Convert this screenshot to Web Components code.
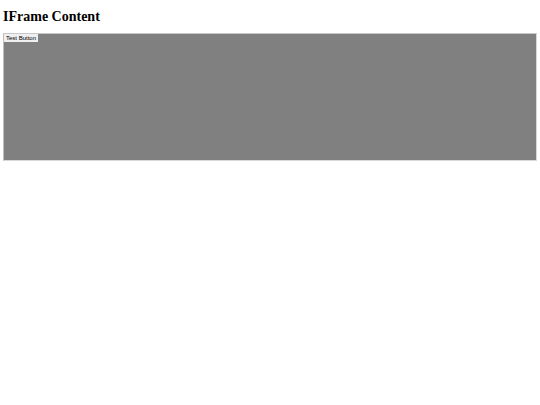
<!DOCTYPE html>
<html lang="en">
<head>
  <meta charset="utf-8">
  <title>IFrame Content</title>
  <style>
    body{
      background-color: white;
      font-family: "Liberation Serif", serif;
      margin: 0;
    }
  </style>
</head>
<body>
  <iframe-page>
    <span slot="title">IFrame Content</span>
    <content-frame>
      <test-button>Test Button</test-button>
    </content-frame>
  </iframe-page>

  <script>
    class TestButton extends HTMLElement {
      constructor () {
        super()
        this.shadow = this.attachShadow({ mode: 'open' })
      }

      connectedCallback () {
        this.render()
      }

      render () {
        this.shadow.innerHTML =
          /* html */`
          <style>
            :host{
              display: block;
            }
            button{
              background-color: rgb(239, 239, 239);
              border: none;
              color: black;
              display: block;
              font: 6px/8px "Liberation Sans", sans-serif;
              padding: 0 2px;
            }
          </style>
          <button type="button"><slot></slot></button>
        `
      }
    }
    customElements.define('test-button', TestButton)

    class ContentFrame extends HTMLElement {
      constructor () {
        super()
        this.shadow = this.attachShadow({ mode: 'open' })
      }

      connectedCallback () {
        this.render()
      }

      render () {
        this.shadow.innerHTML =
          /* html */`
          <style>
            :host{
              align-items: flex-start;
              background-color: gray;
              border: 1px solid;
              border-color: rgb(200, 200, 200) rgb(215, 215, 215) rgb(215, 215, 215) rgb(190, 190, 190);
              box-sizing: border-box;
              display: flex;
              min-height: 128px;
            }
          </style>
          <slot></slot>
        `
      }
    }
    customElements.define('content-frame', ContentFrame)

    class IframePage extends HTMLElement {
      constructor () {
        super()
        this.shadow = this.attachShadow({ mode: 'open' })
      }

      connectedCallback () {
        this.render()
      }

      render () {
        this.shadow.innerHTML =
          /* html */`
          <style>
            :host{
              display: block;
              padding: 9px 3px;
            }
            h1{
              font-size: 14px;
              line-height: 16px;
              margin: 0 0 8px;
            }
          </style>
          <h1><slot name="title"></slot></h1>
          <slot></slot>
        `
      }
    }
    customElements.define('iframe-page', IframePage)
  </script>
</body>
</html>
